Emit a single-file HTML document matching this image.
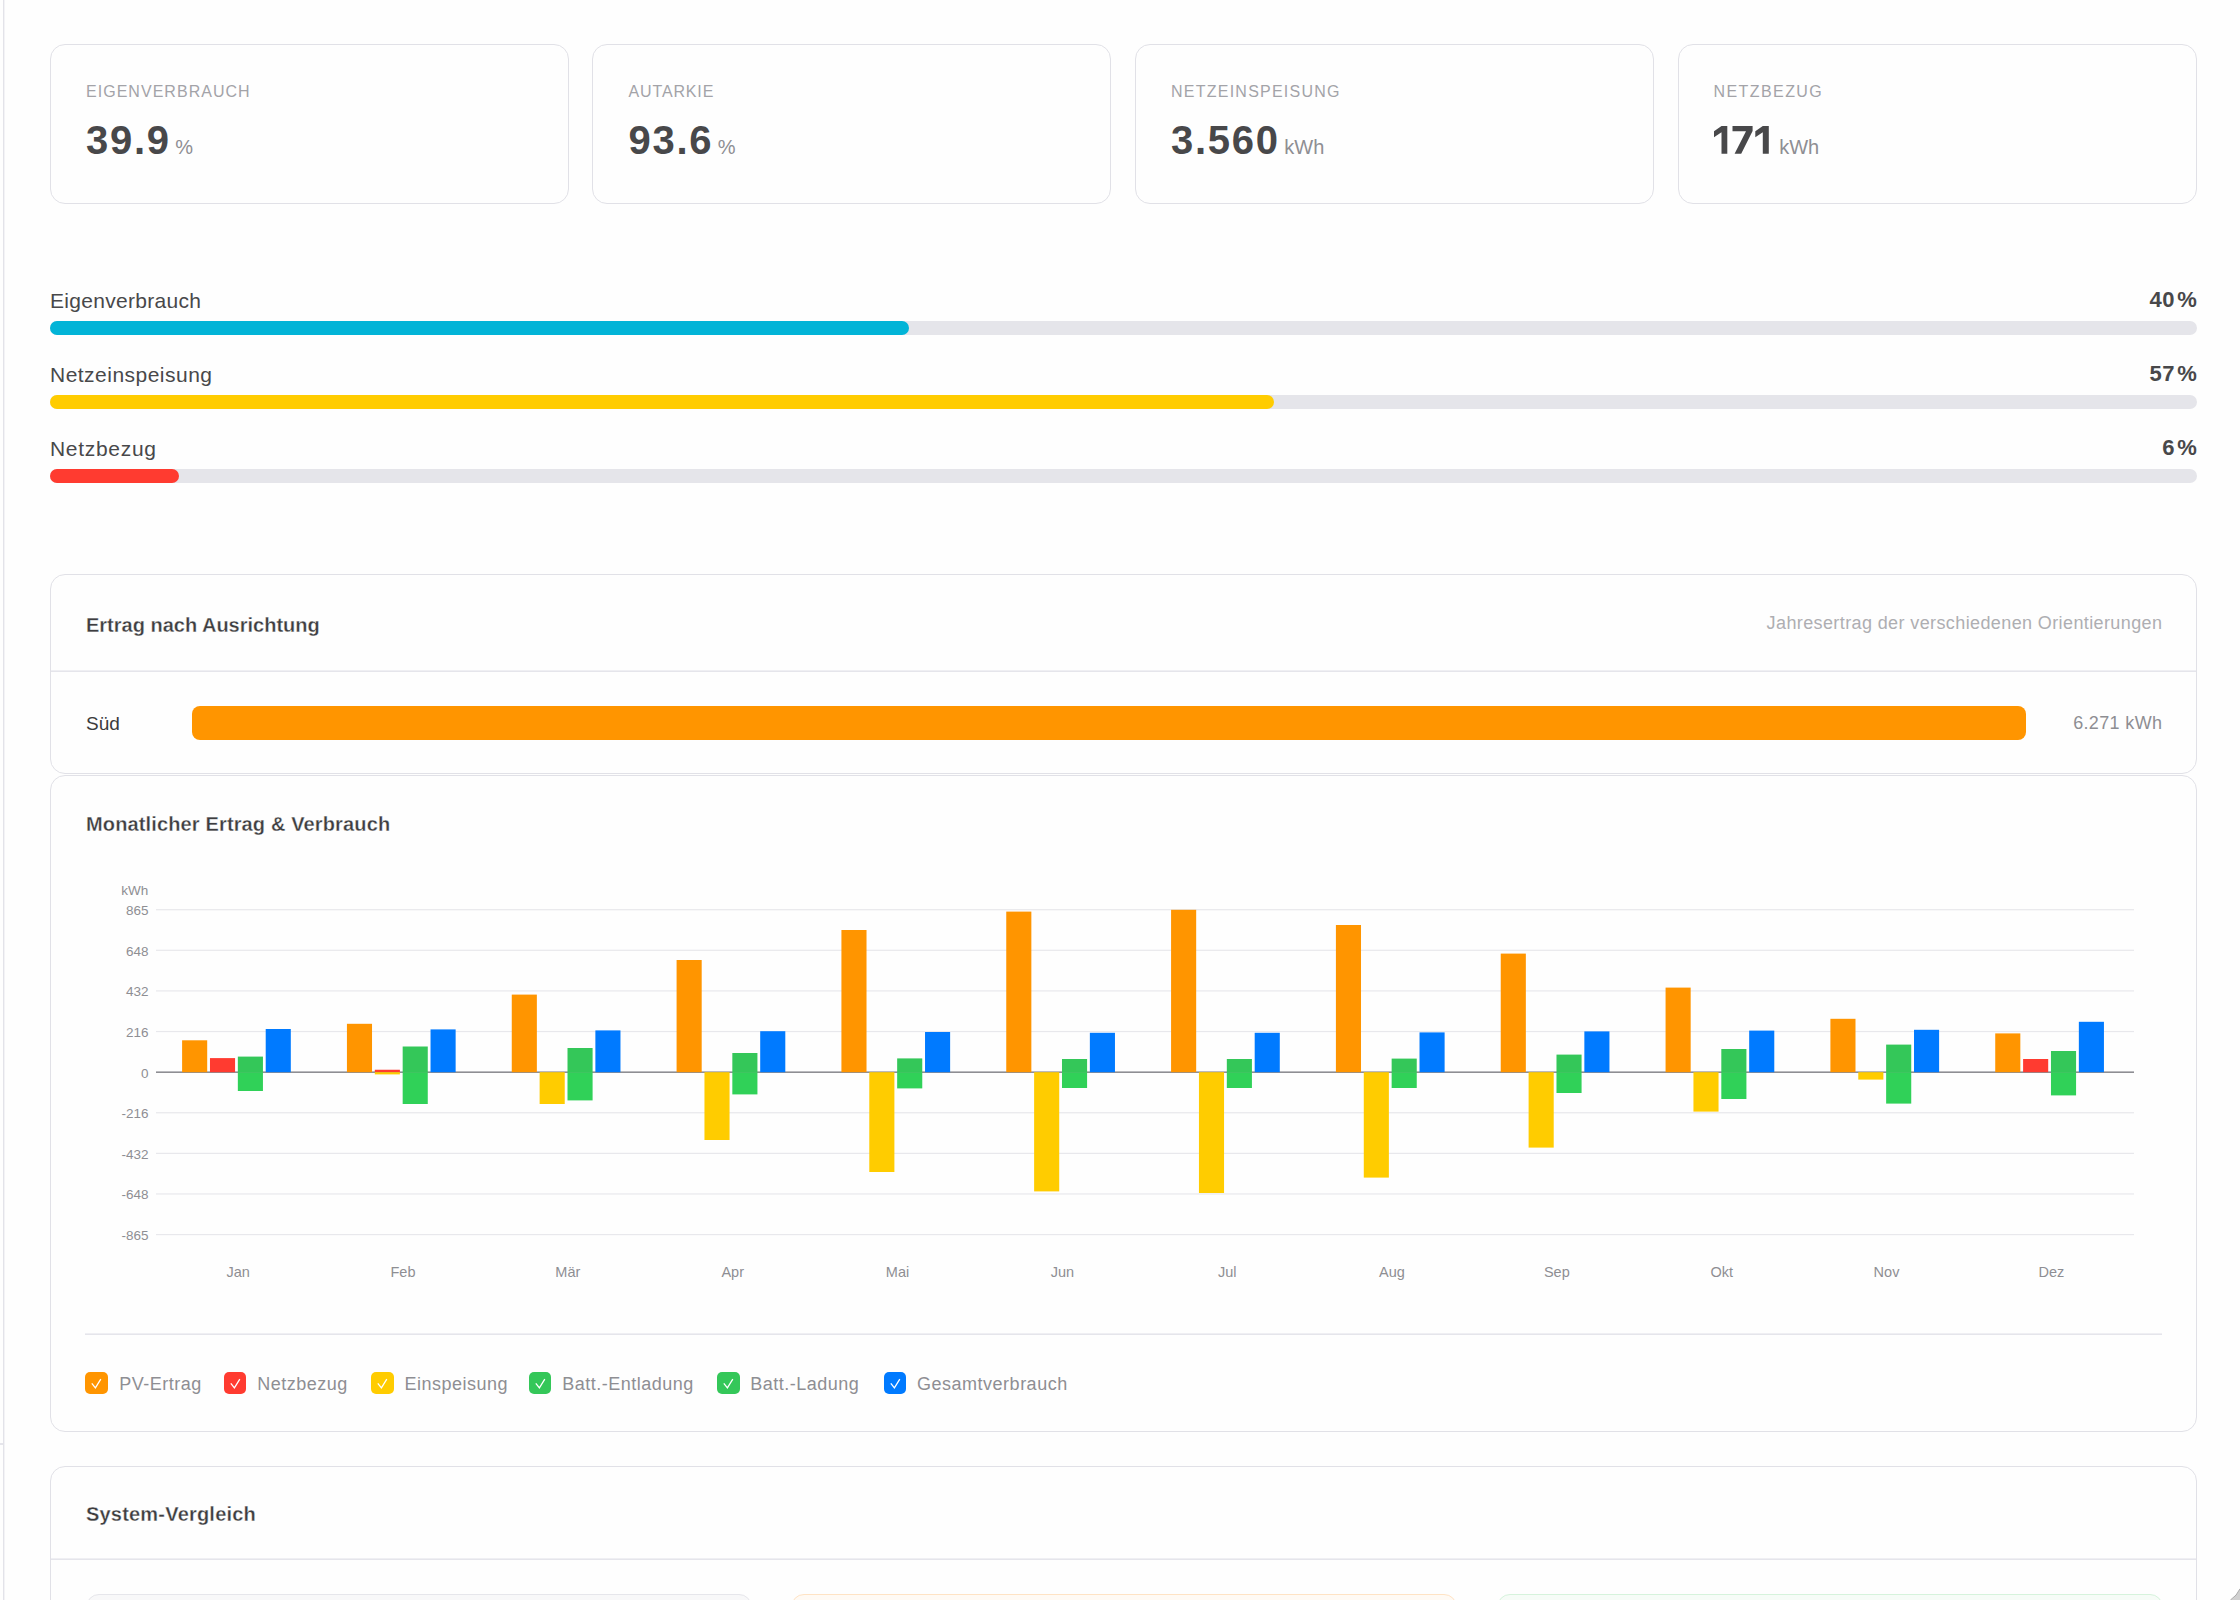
<!DOCTYPE html>
<html><head><meta charset="utf-8">
<style>
*{box-sizing:border-box;margin:0;padding:0}
html,body{width:2240px;height:1600px;overflow:hidden;background:#fefefe;font-family:"Liberation Sans",sans-serif}
.t{position:absolute;line-height:1;white-space:nowrap}
.card{position:absolute;border:1px solid #e1e1e7;border-radius:15px;background:#fefefe}
.hl{position:absolute;height:2px;background:linear-gradient(#efeff3 50%,#e5e5eb 50%)}
.track{position:absolute;left:50px;width:2147px;height:14px;border-radius:7px;background:#e5e5ea}
.fill{position:absolute;left:0;top:0;height:14px;border-radius:7px}
.cb{position:absolute;width:22.5px;height:22px;border-radius:5px}
.cb svg{position:absolute;left:0;top:0}
</style></head><body>
<div style="position:absolute;left:3px;top:0;width:1px;height:1600px;background:#e3e3e9"></div><div style="position:absolute;left:4px;top:0;width:1px;height:1600px;background:#f3f3f6"></div>
<div style="position:absolute;left:0;top:1443px;width:3px;height:2px;background:#e5e5eb"></div>
<div class="card" style="left:50px;top:44px;width:519px;height:160px"></div>
<div class="t" style="top:83.76px;font-size:16px;color:#a3a3a8;font-weight:400;letter-spacing:1.03px;left:86.0px;">EIGENVERBRAUCH</div>
<div class="t" style="top:120.34px;font-size:40px;color:#48484a;font-weight:700;letter-spacing:1.7px;left:86.0px;">39.9<span style="font-size:20px;font-weight:400;color:#8e8e93;margin-left:4.7px;letter-spacing:0">%</span></div>
<div class="card" style="left:592px;top:44px;width:519px;height:160px"></div>
<div class="t" style="top:83.76px;font-size:16px;color:#a3a3a8;font-weight:400;letter-spacing:0.86px;left:628.5px;">AUTARKIE</div>
<div class="t" style="top:120.34px;font-size:40px;color:#48484a;font-weight:700;letter-spacing:1.7px;left:628.5px;">93.6<span style="font-size:20px;font-weight:400;color:#8e8e93;margin-left:4.7px;letter-spacing:0">%</span></div>
<div class="card" style="left:1135px;top:44px;width:519px;height:160px"></div>
<div class="t" style="top:83.76px;font-size:16px;color:#a3a3a8;font-weight:400;letter-spacing:1.24px;left:1171.0px;">NETZEINSPEISUNG</div>
<div class="t" style="top:120.34px;font-size:40px;color:#48484a;font-weight:700;letter-spacing:1.7px;left:1171.0px;">3.560<span style="font-size:20px;font-weight:400;color:#8e8e93;margin-left:4.7px;letter-spacing:0">kWh</span></div>
<div class="card" style="left:1678px;top:44px;width:519px;height:160px"></div>
<div class="t" style="top:83.76px;font-size:16px;color:#a3a3a8;font-weight:400;letter-spacing:1.42px;left:1713.5px;">NETZBEZUG</div>
<svg style="position:absolute;left:0;top:0" width="2240" height="200"><g fill="#48484a"><polygon points="1714,131.3 1721.5,125.9 1727.3,125.9 1727.3,153.8 1721.5,153.8 1721.5,132.2 1714,137.2"/><polygon points="1732.5,125.9 1752.6,125.9 1752.6,130.9 1741.2,153.8 1734.6,153.8 1746.0,131.3 1732.5,131.3"/><polygon points="1755.3,131.3 1762.8,125.9 1768.8,125.9 1768.8,153.8 1762.8,153.8 1762.8,132.2 1755.3,137.2"/></g></svg>
<div class="t" style="top:137.27px;font-size:20px;color:#8e8e93;font-weight:400;left:1779.2px;">kWh</div>
<div class="t" style="top:289.72px;font-size:21px;color:#48484a;font-weight:400;letter-spacing:0.3px;left:50px;">Eigenverbrauch</div>
<div class="t" style="top:288.88px;font-size:22px;color:#48484a;font-weight:700;letter-spacing:0.6px;right:65.40000000000009px;text-align:right;margin-right:-0.6px;">40</div>
<div class="t" style="top:288.88px;font-size:22px;color:#48484a;font-weight:700;left:2177.2px;transform:scaleX(1.0);transform-origin:0 0;">%</div>
<div class="track" style="top:321px"><div class="fill" style="width:858.8px;background:#02b4d7"></div></div>
<div class="t" style="top:363.72px;font-size:21px;color:#48484a;font-weight:400;letter-spacing:0.48px;left:50px;">Netzeinspeisung</div>
<div class="t" style="top:362.88px;font-size:22px;color:#48484a;font-weight:700;letter-spacing:0.6px;right:65.40000000000009px;text-align:right;margin-right:-0.6px;">57</div>
<div class="t" style="top:362.88px;font-size:22px;color:#48484a;font-weight:700;left:2177.2px;transform:scaleX(1.0);transform-origin:0 0;">%</div>
<div class="track" style="top:395px"><div class="fill" style="width:1223.8px;background:#ffcc00"></div></div>
<div class="t" style="top:437.72px;font-size:21px;color:#48484a;font-weight:400;letter-spacing:0.7px;left:50px;">Netzbezug</div>
<div class="t" style="top:436.88px;font-size:22px;color:#48484a;font-weight:700;letter-spacing:0.6px;right:65.40000000000009px;text-align:right;margin-right:-0.6px;">6</div>
<div class="t" style="top:436.88px;font-size:22px;color:#48484a;font-weight:700;left:2177.2px;transform:scaleX(1.0);transform-origin:0 0;">%</div>
<div class="track" style="top:469px"><div class="fill" style="width:128.8px;background:#ff3b30"></div></div>
<div class="card" style="left:50px;top:574px;width:2147px;height:200px"></div>
<div class="hl" style="left:51px;top:670px;width:2145px"></div>
<div class="t" style="top:614.57px;font-size:20px;color:#3d3d40;font-weight:700;left:86px;-webkit-text-stroke:0.3px #fefefe;">Ertrag nach Ausrichtung</div>
<div class="t" style="top:614.36px;font-size:18px;color:#aeaeb2;font-weight:400;letter-spacing:0.39px;right:78px;text-align:right;margin-right:-0.39px;">Jahresertrag der verschiedenen Orientierungen</div>
<div class="t" style="top:713.52px;font-size:19px;color:#3a3a3c;font-weight:400;left:86px;">Süd</div>
<div style="position:absolute;left:192px;top:706px;width:1834px;height:34px;border-radius:8px;background:#ff9500"></div>
<div class="t" style="top:714.46px;font-size:18px;color:#8e8e93;font-weight:400;letter-spacing:0.35px;right:78px;text-align:right;margin-right:-0.35px;">6.271 kWh</div>
<div class="card" style="left:50px;top:775px;width:2147px;height:657px"></div>
<div class="t" style="top:813.67px;font-size:20px;color:#3d3d40;font-weight:700;letter-spacing:0.14px;left:86px;-webkit-text-stroke:0.3px #fefefe;">Monatlicher Ertrag &amp; Verbrauch</div>
<svg style="position:absolute;left:0;top:0" width="2240" height="1600">
<rect x="156" y="909.10" width="1978" height="1.2" fill="#e8e8ec"/>
<rect x="156" y="949.71" width="1978" height="1.2" fill="#e8e8ec"/>
<rect x="156" y="990.32" width="1978" height="1.2" fill="#e8e8ec"/>
<rect x="156" y="1030.93" width="1978" height="1.2" fill="#e8e8ec"/>
<rect x="156" y="1071.40" width="1978" height="1.6" fill="#8e8e93"/>
<rect x="156" y="1112.15" width="1978" height="1.2" fill="#e8e8ec"/>
<rect x="156" y="1152.76" width="1978" height="1.2" fill="#e8e8ec"/>
<rect x="156" y="1193.37" width="1978" height="1.2" fill="#e8e8ec"/>
<rect x="156" y="1233.98" width="1978" height="1.2" fill="#e8e8ec"/>
<rect x="182.10" y="1040.30" width="25.1" height="31.90" fill="#ff9500"/>
<rect x="209.97" y="1058.10" width="25.1" height="14.10" fill="#ff3b30"/>
<rect x="237.84" y="1056.60" width="25.1" height="15.60" fill="#34c759"/>
<rect x="237.84" y="1072.20" width="25.1" height="18.80" fill="#30d158"/>
<rect x="265.71" y="1029.00" width="25.1" height="43.20" fill="#007aff"/>
<rect x="346.93" y="1023.80" width="25.1" height="48.40" fill="#ff9500"/>
<rect x="374.80" y="1069.75" width="25.1" height="2.45" fill="#ff3b30"/>
<rect x="374.80" y="1072.20" width="25.1" height="2.20" fill="#ffcc00"/>
<rect x="402.67" y="1046.50" width="25.1" height="25.70" fill="#34c759"/>
<rect x="402.67" y="1072.20" width="25.1" height="31.80" fill="#30d158"/>
<rect x="430.54" y="1029.40" width="25.1" height="42.80" fill="#007aff"/>
<rect x="511.76" y="994.60" width="25.1" height="77.60" fill="#ff9500"/>
<rect x="539.63" y="1072.20" width="25.1" height="31.80" fill="#ffcc00"/>
<rect x="567.50" y="1048.00" width="25.1" height="24.20" fill="#34c759"/>
<rect x="567.50" y="1072.20" width="25.1" height="28.20" fill="#30d158"/>
<rect x="595.37" y="1030.40" width="25.1" height="41.80" fill="#007aff"/>
<rect x="676.59" y="960.00" width="25.1" height="112.20" fill="#ff9500"/>
<rect x="704.46" y="1072.20" width="25.1" height="67.80" fill="#ffcc00"/>
<rect x="732.33" y="1053.00" width="25.1" height="19.20" fill="#34c759"/>
<rect x="732.33" y="1072.20" width="25.1" height="22.20" fill="#30d158"/>
<rect x="760.20" y="1031.20" width="25.1" height="41.00" fill="#007aff"/>
<rect x="841.42" y="930.00" width="25.1" height="142.20" fill="#ff9500"/>
<rect x="869.29" y="1072.20" width="25.1" height="99.80" fill="#ffcc00"/>
<rect x="897.16" y="1058.40" width="25.1" height="13.80" fill="#34c759"/>
<rect x="897.16" y="1072.20" width="25.1" height="16.20" fill="#30d158"/>
<rect x="925.03" y="1032.00" width="25.1" height="40.20" fill="#007aff"/>
<rect x="1006.25" y="911.60" width="25.1" height="160.60" fill="#ff9500"/>
<rect x="1034.12" y="1072.20" width="25.1" height="119.20" fill="#ffcc00"/>
<rect x="1061.99" y="1059.00" width="25.1" height="13.20" fill="#34c759"/>
<rect x="1061.99" y="1072.20" width="25.1" height="15.80" fill="#30d158"/>
<rect x="1089.86" y="1032.80" width="25.1" height="39.40" fill="#007aff"/>
<rect x="1171.08" y="909.80" width="25.1" height="162.40" fill="#ff9500"/>
<rect x="1198.95" y="1072.20" width="25.1" height="120.80" fill="#ffcc00"/>
<rect x="1226.82" y="1059.00" width="25.1" height="13.20" fill="#34c759"/>
<rect x="1226.82" y="1072.20" width="25.1" height="15.80" fill="#30d158"/>
<rect x="1254.69" y="1032.80" width="25.1" height="39.40" fill="#007aff"/>
<rect x="1335.91" y="925.00" width="25.1" height="147.20" fill="#ff9500"/>
<rect x="1363.78" y="1072.20" width="25.1" height="105.40" fill="#ffcc00"/>
<rect x="1391.65" y="1058.60" width="25.1" height="13.60" fill="#34c759"/>
<rect x="1391.65" y="1072.20" width="25.1" height="15.80" fill="#30d158"/>
<rect x="1419.52" y="1032.40" width="25.1" height="39.80" fill="#007aff"/>
<rect x="1500.74" y="953.60" width="25.1" height="118.60" fill="#ff9500"/>
<rect x="1528.61" y="1072.20" width="25.1" height="75.40" fill="#ffcc00"/>
<rect x="1556.48" y="1054.60" width="25.1" height="17.60" fill="#34c759"/>
<rect x="1556.48" y="1072.20" width="25.1" height="20.80" fill="#30d158"/>
<rect x="1584.35" y="1031.40" width="25.1" height="40.80" fill="#007aff"/>
<rect x="1665.57" y="987.60" width="25.1" height="84.60" fill="#ff9500"/>
<rect x="1693.44" y="1072.20" width="25.1" height="39.40" fill="#ffcc00"/>
<rect x="1721.31" y="1049.00" width="25.1" height="23.20" fill="#34c759"/>
<rect x="1721.31" y="1072.20" width="25.1" height="26.80" fill="#30d158"/>
<rect x="1749.18" y="1030.60" width="25.1" height="41.60" fill="#007aff"/>
<rect x="1830.40" y="1018.80" width="25.1" height="53.40" fill="#ff9500"/>
<rect x="1858.27" y="1072.20" width="25.1" height="7.40" fill="#ffcc00"/>
<rect x="1886.14" y="1044.60" width="25.1" height="27.60" fill="#34c759"/>
<rect x="1886.14" y="1072.20" width="25.1" height="31.40" fill="#30d158"/>
<rect x="1914.01" y="1029.80" width="25.1" height="42.40" fill="#007aff"/>
<rect x="1995.23" y="1033.40" width="25.1" height="38.80" fill="#ff9500"/>
<rect x="2023.10" y="1059.00" width="25.1" height="13.20" fill="#ff3b30"/>
<rect x="2050.97" y="1051.00" width="25.1" height="21.20" fill="#34c759"/>
<rect x="2050.97" y="1072.20" width="25.1" height="23.20" fill="#30d158"/>
<rect x="2078.84" y="1021.80" width="25.1" height="50.40" fill="#007aff"/>
</svg>
<div class="t" style="top:884.37px;font-size:13.5px;color:#8e8e93;font-weight:400;right:2091.7px;text-align:right;">kWh</div>
<div class="t" style="top:904.07px;font-size:13.5px;color:#8e8e93;font-weight:400;right:2091.5px;text-align:right;">865</div>
<div class="t" style="top:944.68px;font-size:13.5px;color:#8e8e93;font-weight:400;right:2091.5px;text-align:right;">648</div>
<div class="t" style="top:985.29px;font-size:13.5px;color:#8e8e93;font-weight:400;right:2091.5px;text-align:right;">432</div>
<div class="t" style="top:1025.90px;font-size:13.5px;color:#8e8e93;font-weight:400;right:2091.5px;text-align:right;">216</div>
<div class="t" style="top:1066.51px;font-size:13.5px;color:#8e8e93;font-weight:400;right:2091.5px;text-align:right;">0</div>
<div class="t" style="top:1107.12px;font-size:13.5px;color:#8e8e93;font-weight:400;right:2091.5px;text-align:right;">-216</div>
<div class="t" style="top:1147.73px;font-size:13.5px;color:#8e8e93;font-weight:400;right:2091.5px;text-align:right;">-432</div>
<div class="t" style="top:1188.34px;font-size:13.5px;color:#8e8e93;font-weight:400;right:2091.5px;text-align:right;">-648</div>
<div class="t" style="top:1228.95px;font-size:13.5px;color:#8e8e93;font-weight:400;right:2091.5px;text-align:right;">-865</div>
<div class="t" style="top:1264.73px;font-size:14.5px;color:#8e8e93;font-weight:400;left:-61.80000000000001px;width:600px;text-align:center;">Jan</div>
<div class="t" style="top:1264.73px;font-size:14.5px;color:#8e8e93;font-weight:400;left:103.02999999999997px;width:600px;text-align:center;">Feb</div>
<div class="t" style="top:1264.73px;font-size:14.5px;color:#8e8e93;font-weight:400;left:267.86px;width:600px;text-align:center;">Mär</div>
<div class="t" style="top:1264.73px;font-size:14.5px;color:#8e8e93;font-weight:400;left:432.69000000000005px;width:600px;text-align:center;">Apr</div>
<div class="t" style="top:1264.73px;font-size:14.5px;color:#8e8e93;font-weight:400;left:597.52px;width:600px;text-align:center;">Mai</div>
<div class="t" style="top:1264.73px;font-size:14.5px;color:#8e8e93;font-weight:400;left:762.3500000000001px;width:600px;text-align:center;">Jun</div>
<div class="t" style="top:1264.73px;font-size:14.5px;color:#8e8e93;font-weight:400;left:927.1800000000001px;width:600px;text-align:center;">Jul</div>
<div class="t" style="top:1264.73px;font-size:14.5px;color:#8e8e93;font-weight:400;left:1092.0100000000002px;width:600px;text-align:center;">Aug</div>
<div class="t" style="top:1264.73px;font-size:14.5px;color:#8e8e93;font-weight:400;left:1256.8400000000001px;width:600px;text-align:center;">Sep</div>
<div class="t" style="top:1264.73px;font-size:14.5px;color:#8e8e93;font-weight:400;left:1421.67px;width:600px;text-align:center;">Okt</div>
<div class="t" style="top:1264.73px;font-size:14.5px;color:#8e8e93;font-weight:400;left:1586.5000000000002px;width:600px;text-align:center;">Nov</div>
<div class="t" style="top:1264.73px;font-size:14.5px;color:#8e8e93;font-weight:400;left:1751.33px;width:600px;text-align:center;">Dez</div>
<div class="hl" style="left:85px;top:1333px;width:2077px"></div>
<div class="cb" style="left:85px;top:1372px;background:#ff9500"><svg width="23" height="22" viewBox="0 0 23 22"><path d="M6.8 11.4 L10.4 15.8 L15.8 7.2" fill="none" stroke="#fff" stroke-width="1.3" stroke-linecap="butt" stroke-linejoin="miter"/></svg></div>
<div class="t" style="top:1375.26px;font-size:18px;color:#8e8e93;font-weight:400;letter-spacing:0.5px;left:119.2px;">PV-Ertrag</div>
<div class="cb" style="left:223.6px;top:1372px;background:#ff3b30"><svg width="23" height="22" viewBox="0 0 23 22"><path d="M6.8 11.4 L10.4 15.8 L15.8 7.2" fill="none" stroke="#fff" stroke-width="1.3" stroke-linecap="butt" stroke-linejoin="miter"/></svg></div>
<div class="t" style="top:1375.26px;font-size:18px;color:#8e8e93;font-weight:400;letter-spacing:0.5px;left:257.2px;">Netzbezug</div>
<div class="cb" style="left:371.4px;top:1372px;background:#ffcc00"><svg width="23" height="22" viewBox="0 0 23 22"><path d="M6.8 11.4 L10.4 15.8 L15.8 7.2" fill="none" stroke="#fff" stroke-width="1.3" stroke-linecap="butt" stroke-linejoin="miter"/></svg></div>
<div class="t" style="top:1375.26px;font-size:18px;color:#8e8e93;font-weight:400;letter-spacing:0.5px;left:404.5px;">Einspeisung</div>
<div class="cb" style="left:528.9px;top:1372px;background:#34c759"><svg width="23" height="22" viewBox="0 0 23 22"><path d="M6.8 11.4 L10.4 15.8 L15.8 7.2" fill="none" stroke="#fff" stroke-width="1.3" stroke-linecap="butt" stroke-linejoin="miter"/></svg></div>
<div class="t" style="top:1375.26px;font-size:18px;color:#8e8e93;font-weight:400;letter-spacing:0.5px;left:562.2px;">Batt.-Entladung</div>
<div class="cb" style="left:717px;top:1372px;background:#34c759"><svg width="23" height="22" viewBox="0 0 23 22"><path d="M6.8 11.4 L10.4 15.8 L15.8 7.2" fill="none" stroke="#fff" stroke-width="1.3" stroke-linecap="butt" stroke-linejoin="miter"/></svg></div>
<div class="t" style="top:1375.26px;font-size:18px;color:#8e8e93;font-weight:400;letter-spacing:0.5px;left:750.2px;">Batt.-Ladung</div>
<div class="cb" style="left:883.6px;top:1372px;background:#007aff"><svg width="23" height="22" viewBox="0 0 23 22"><path d="M6.8 11.4 L10.4 15.8 L15.8 7.2" fill="none" stroke="#fff" stroke-width="1.3" stroke-linecap="butt" stroke-linejoin="miter"/></svg></div>
<div class="t" style="top:1375.26px;font-size:18px;color:#8e8e93;font-weight:400;letter-spacing:0.5px;left:917.1px;">Gesamtverbrauch</div>
<div class="card" style="left:50px;top:1466px;width:2147px;height:300px"></div>
<div class="hl" style="left:51px;top:1558px;width:2145px"></div>
<div class="t" style="top:1503.87px;font-size:20px;color:#3d3d40;font-weight:700;letter-spacing:0.2px;left:86px;-webkit-text-stroke:0.3px #fefefe;">System-Vergleich</div>
<div class="card" style="left:86px;top:1594px;width:666px;height:200px;border-color:#e6e6eb;background:#f8f8f9;border-radius:13px"></div>
<div class="card" style="left:791.3px;top:1594px;width:666px;height:200px;border-color:#ffe3c4;background:#fffaf4;border-radius:13px"></div>
<div class="card" style="left:1496.7px;top:1594px;width:666px;height:200px;border-color:#d6f3dc;background:#f6fcf7;border-radius:13px"></div>
<svg style="position:absolute;left:2200px;top:1560px" width="40" height="40" viewBox="2200 1560 40 40"><path d="M2240 1588.8 A26 26 0 0 1 2230.4 1600 L2240 1600 Z" fill="#d0d0d0"/><path d="M2240 1588.8 A26 26 0 0 1 2230.4 1600" fill="none" stroke="#a2a2a2" stroke-width="0.9"/></svg>
</body></html>
